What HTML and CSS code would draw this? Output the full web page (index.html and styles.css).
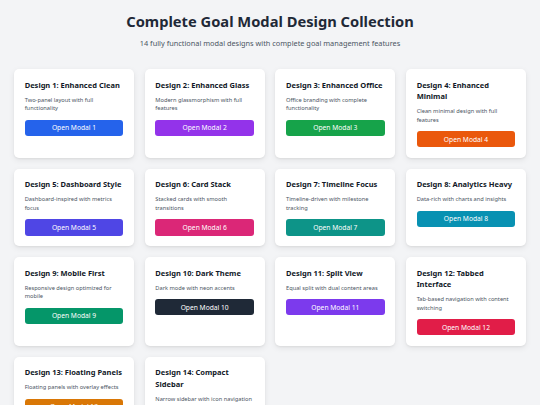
FILE: index.html
```html
<!DOCTYPE html>
<html lang="en">
<head>
<meta charset="utf-8">
<title>Complete Goal Modal Design Collection</title>
<link rel="stylesheet" href="styles.css">
</head>
<body>
<main class="page">
  <header class="header">
    <h1 class="title">Complete Goal Modal Design Collection</h1>
    <p class="subtitle">14 fully functional modal designs with complete goal management features</p>
  </header>
  <section class="grid">
    <div class="card"><h3 class="card-title">Design 1: Enhanced Clean</h3><p class="card-desc">Two-panel layout with full functionality</p><button class="btn btn-blue">Open Modal 1</button></div>
    <div class="card"><h3 class="card-title">Design 2: Enhanced Glass</h3><p class="card-desc">Modern glassmorphism with full features</p><button class="btn btn-purple">Open Modal 2</button></div>
    <div class="card"><h3 class="card-title">Design 3: Enhanced Office</h3><p class="card-desc">Office branding with complete functionality</p><button class="btn btn-green">Open Modal 3</button></div>
    <div class="card"><h3 class="card-title">Design 4: Enhanced Minimal</h3><p class="card-desc">Clean minimal design with full features</p><button class="btn btn-orange">Open Modal 4</button></div>
    <div class="card"><h3 class="card-title">Design 5: Dashboard Style</h3><p class="card-desc">Dashboard-inspired with metrics focus</p><button class="btn btn-indigo">Open Modal 5</button></div>
    <div class="card"><h3 class="card-title">Design 6: Card Stack</h3><p class="card-desc">Stacked cards with smooth transitions</p><button class="btn btn-pink">Open Modal 6</button></div>
    <div class="card"><h3 class="card-title">Design 7: Timeline Focus</h3><p class="card-desc">Timeline-driven with milestone tracking</p><button class="btn btn-teal">Open Modal 7</button></div>
    <div class="card"><h3 class="card-title">Design 8: Analytics Heavy</h3><p class="card-desc">Data-rich with charts and insights</p><button class="btn btn-cyan">Open Modal 8</button></div>
    <div class="card"><h3 class="card-title">Design 9: Mobile First</h3><p class="card-desc">Responsive design optimized for mobile</p><button class="btn btn-emerald">Open Modal 9</button></div>
    <div class="card"><h3 class="card-title">Design 10: Dark Theme</h3><p class="card-desc">Dark mode with neon accents</p><button class="btn btn-dark">Open Modal 10</button></div>
    <div class="card"><h3 class="card-title">Design 11: Split View</h3><p class="card-desc">Equal split with dual content areas</p><button class="btn btn-violet">Open Modal 11</button></div>
    <div class="card"><h3 class="card-title">Design 12: Tabbed Interface</h3><p class="card-desc">Tab-based navigation with content switching</p><button class="btn btn-rose">Open Modal 12</button></div>
    <div class="card"><h3 class="card-title">Design 13: Floating Panels</h3><p class="card-desc">Floating panels with overlay effects</p><button class="btn btn-amber">Open Modal 13</button></div>
    <div class="card"><h3 class="card-title">Design 14: Compact Sidebar</h3><p class="card-desc">Narrow sidebar with icon navigation</p><button class="btn btn-slate">Open Modal 14</button></div>
  </section>
</main>
</body>
</html>
```
FILE: styles.css
```css
* { box-sizing: border-box; }
html, body { margin: 0; padding: 0; }
body {
  background: #f3f4f6;
  font-family: "Noto Sans", "Open Sans", sans-serif;
  color: #1f2937;
}
.page {
  width: 512px;
  margin: 0 auto;
  padding-top: 10px;
}
.header {
  text-align: center;
  margin-bottom: 20px;
}
.title {
  margin: 0;
  font-size: 14.7px;
  line-height: 22px;
  font-weight: 700;
  color: #1f2937;
}
.subtitle {
  margin: 5px 0 0;
  font-size: 7.35px;
  line-height: 12px;
  color: #4b5563;
}
.grid {
  display: grid;
  grid-template-columns: repeat(4, 1fr);
  gap: 10.67px;
}
.card {
  background: #fff;
  border-radius: 5px;
  box-shadow: 0 2px 6px rgba(0,0,0,0.08), 0 1px 2px rgba(0,0,0,0.05);
  padding: 10.67px;
}
.card-title {
  margin: 0;
  font-size: 7.5px;
  line-height: 11.33px;
  font-weight: 700;
  color: #111827;
}
.card-desc {
  margin: 4.67px 0 0;
  font-size: 5.7px;
  line-height: 8.7px;
  color: #4b5563;
}
.btn {
  display: block;
  width: 100%;
  margin-top: 6.67px;
  height: 16.33px;
  border: 0;
  border-radius: 3px;
  color: #fff;
  font-family: inherit;
  font-size: 6.7px;
  padding: 0;
  cursor: pointer;
}
.btn-blue { background: #2563eb; }
.btn-purple { background: #9333ea; }
.btn-green { background: #16a34a; }
.btn-orange { background: #ea580c; }
.btn-indigo { background: #4f46e5; }
.btn-pink { background: #db2777; }
.btn-teal { background: #0d9488; }
.btn-cyan { background: #0891b2; }
.btn-emerald { background: #059669; }
.btn-dark { background: #1f2937; }
.btn-violet { background: #7c3aed; }
.btn-rose { background: #e11d48; }
.btn-amber { background: #d97706; }
.btn-slate { background: #475569; }
```
